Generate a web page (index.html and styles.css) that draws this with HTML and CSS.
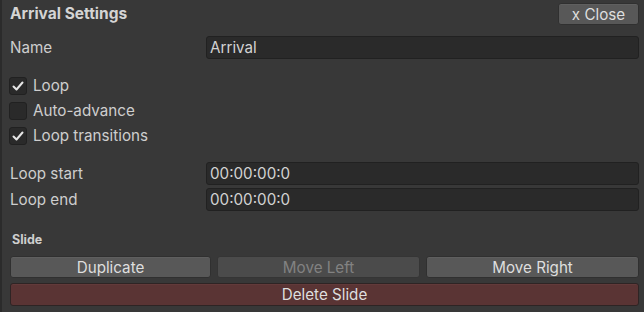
FILE: index.html
```html
<!DOCTYPE html>
<html lang="en">
<head>
    <meta charset="UTF-8">
    <meta name="viewport" content="width=device-width, initial-scale=1.0">
    <title>Arrival Settings</title>
    <link rel="stylesheet" href="styles.css">
</head>
<body>
    <div class="panel">
        <div class="header">
            <span class="title">Arrival Settings</span>
            <button class="btn close-btn">x Close</button>
        </div>

        <div class="field-row name-row">
            <label class="label">Name</label>
            <div class="field">Arrival</div>
        </div>

        <div class="checks">
            <div class="check-row">
                <span class="box"><svg viewBox="0 0 16 16" width="16" height="16"><path d="M3.5 8.5 L6.5 11.5 L12.5 4.5" fill="none" stroke="#e6e6e6" stroke-width="2" stroke-linecap="round" stroke-linejoin="round"/></svg></span>
                <span class="check-label">Loop</span>
            </div>
            <div class="check-row">
                <span class="box"></span>
                <span class="check-label">Auto-advance</span>
            </div>
            <div class="check-row">
                <span class="box"><svg viewBox="0 0 16 16" width="16" height="16"><path d="M3.5 8.5 L6.5 11.5 L12.5 4.5" fill="none" stroke="#e6e6e6" stroke-width="2" stroke-linecap="round" stroke-linejoin="round"/></svg></span>
                <span class="check-label">Loop transitions</span>
            </div>
        </div>

        <div class="times">
            <div class="field-row">
                <label class="label">Loop start</label>
                <div class="field">00:00:00:0</div>
            </div>
            <div class="field-row">
                <label class="label">Loop end</label>
                <div class="field">00:00:00:0</div>
            </div>
        </div>

        <div class="section">Slide</div>
        <div class="btn-row">
            <button class="btn dup">Duplicate</button>
            <button class="btn left disabled">Move Left</button>
            <button class="btn right">Move Right</button>
        </div>
        <button class="btn danger">Delete Slide</button>
    </div>
</body>
</html>
```

FILE: styles.css
```css
html, body {
    margin: 0;
    padding: 0;
    height: 100%;
}
body {
    background: #383838;
    color: #cecece;
    font-family: Inter, "Noto Sans", sans-serif;
    font-size: 15.2px;
}
.panel {
    height: 100%;
    box-sizing: border-box;
    border-left: 2px solid #2b2b2b;
    padding: 3px 5px 0 8px;
}
.header {
    display: flex;
    justify-content: space-between;
    align-items: center;
    height: 22px;
}
.title {
    font-weight: bold;
    font-size: 15.5px;
    color: #d4d4d4;
    margin-top: -1px;
}
.btn {
    font-family: inherit;
    font-size: 15.2px;
    color: #dedede;
    background: #585858;
    border: 1px solid #303030;
    border-radius: 3px;
    padding: 0;
    height: 22px;
    box-sizing: border-box;
    box-shadow: inset 0 1px 0 #5f5f5f;
}
.close-btn {
    width: 81px;
}
.field-row {
    display: flex;
    align-items: center;
    height: 23px;
}
.name-row {
    margin-top: 11px;
}
.label {
    width: 196px;
    flex-shrink: 0;
}
.field {
    flex: 1;
    height: 23px;
    box-sizing: border-box;
    background: #2a2a2a;
    border: 1px solid #212121;
    border-radius: 3px;
    padding-left: 3px;
    line-height: 21px;
    color: #d2d2d2;
}
.checks {
    margin-top: 14px;
}
.check-row {
    display: flex;
    align-items: center;
    height: 25px;
}
.box {
    width: 16px;
    height: 16px;
    background: #2a2a2a;
    border: 1px solid #212121;
    border-radius: 3px;
    margin-left: -1px;
    margin-right: 6px;
    display: flex;
}
.times {
    margin-top: 14px;
    display: flex;
    flex-direction: column;
    gap: 3px;
}
.section {
    margin-top: 21px;
    height: 16px;
    line-height: 16px;
    font-size: 12.5px;
    font-weight: bold;
    padding-left: 2px;
}
.btn-row {
    margin-top: 8px;
    display: flex;
    gap: 6px;
}
.btn-row .btn {
    flex-basis: 0;
}
.btn.dup {
    flex-grow: 201;
}
.btn.left {
    flex-grow: 203;
}
.btn.right {
    flex-grow: 213;
}
.btn.disabled {
    background: #4b4b4b;
    color: #828282;
    border-color: #353535;
    box-shadow: none;
}
.btn.danger {
    display: block;
    width: 100%;
    margin-top: 5px;
    height: 23px;
    background: #5a3434;
    border-color: #2e2424;
    box-shadow: inset 0 1px 0 #623a3a;
}
```
